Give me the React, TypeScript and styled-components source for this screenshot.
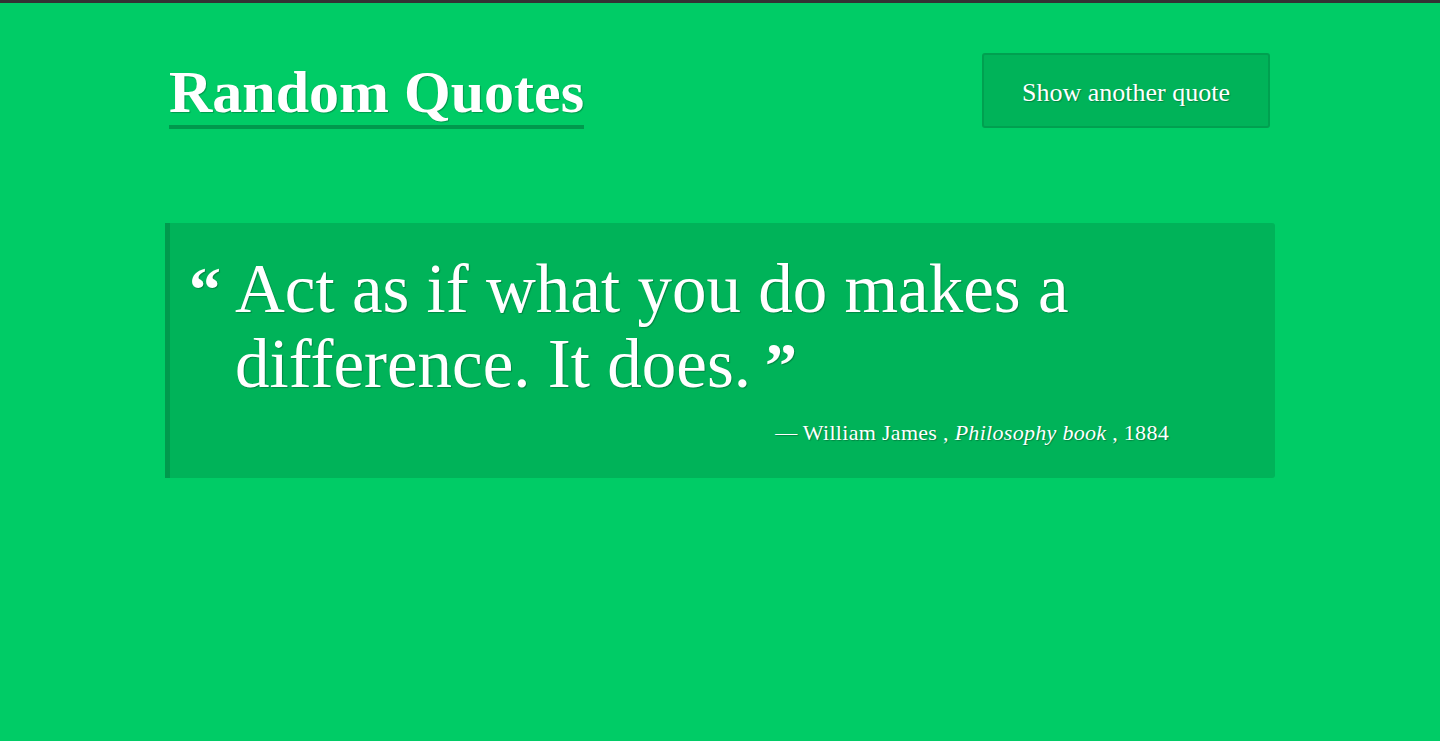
import * as React from "react";
import styled, { createGlobalStyle } from "styled-components";

interface Quote {
  text: string;
  author: string;
  source: string;
  year: string;
}

const quote: Quote = {
  text: "Act as if what you do makes a difference. It does.",
  author: "William James",
  source: "Philosophy book",
  year: "1884",
};

const GlobalStyle = createGlobalStyle`
  html, body {
    margin: 0;
    padding: 0;
    background: #00cc66;
    min-height: 100%;
  }
  body {
    font-family: "Liberation Serif", "DejaVu Serif", serif;
    color: #ffffff;
  }
`;

const TopBar = styled.div`
  height: 3px;
  background: #333333;
`;

const Page = styled.div`
  width: 1110px;
  margin: 0 auto;
  padding-top: 50px;
  min-height: 738px;
  box-sizing: border-box;
`;

const Header = styled.header`
  display: flex;
  justify-content: space-between;
  align-items: flex-end;
  padding: 0 5px 0 4px;
`;

const Title = styled.h1`
  margin: 0 0 -1px 0;
  font-size: 60px;
  line-height: 60px;
  font-weight: 700;
  padding-bottom: 3px;
  border-bottom: 4px solid #00994d;
  text-shadow: 1px 1px 1px rgba(0, 0, 0, 0.25);
`;

const NextButton = styled.button`
  width: 288px;
  height: 75px;
  padding: 4px 0 0 0;
  background: #00b359;
  border: 2px solid #00a050;
  border-radius: 3px;
  color: #ffffff;
  font-family: "Liberation Serif", "DejaVu Serif", serif;
  font-size: 26px;
  text-shadow: 1px 1px 1px rgba(0, 0, 0, 0.25);
  cursor: pointer;
`;

const Card = styled.blockquote`
  margin: 95px 0 0 0;
  background: #00b359;
  border-left: 5px solid #009a4d;
  border-radius: 0 3px 3px 0;
  padding: 29px 106px 31px 19px;
  text-shadow: 1px 1px 1px rgba(0, 0, 0, 0.25);
`;

const QuoteRow = styled.div`
  display: flex;
  font-size: 69px;
  line-height: 75px;
`;

const OpenMark = styled.span`
  font-weight: 700;
  width: 46px;
  flex: none;
  font-size: 64px;
`;

const CloseMark = styled.span`
  font-weight: 700;
  font-size: 64px;
  padding-left: 14px;
`;

const QuoteText = styled.p`
  margin: 0;
  flex: 1;
`;

const Attribution = styled.footer`
  margin-top: 16px;
  text-align: right;
  font-size: 22px;
  line-height: 28px;
  letter-spacing: 0.3px;
`;

const Source = styled.cite`
  font-style: italic;
`;

const App: React.FC = () => {
  return (
    <>
      <GlobalStyle />
      <TopBar />
      <Page>
        <Header>
          <Title>Random Quotes</Title>
          <NextButton>Show another quote</NextButton>
        </Header>
        <Card>
          <QuoteRow>
            <OpenMark>“</OpenMark>
            <QuoteText>
              {quote.text}
              <CloseMark>”</CloseMark>
            </QuoteText>
          </QuoteRow>
          <Attribution>
            — {quote.author} , <Source>{quote.source}</Source> , {quote.year}
          </Attribution>
        </Card>
      </Page>
    </>
  );
};

export default App;
